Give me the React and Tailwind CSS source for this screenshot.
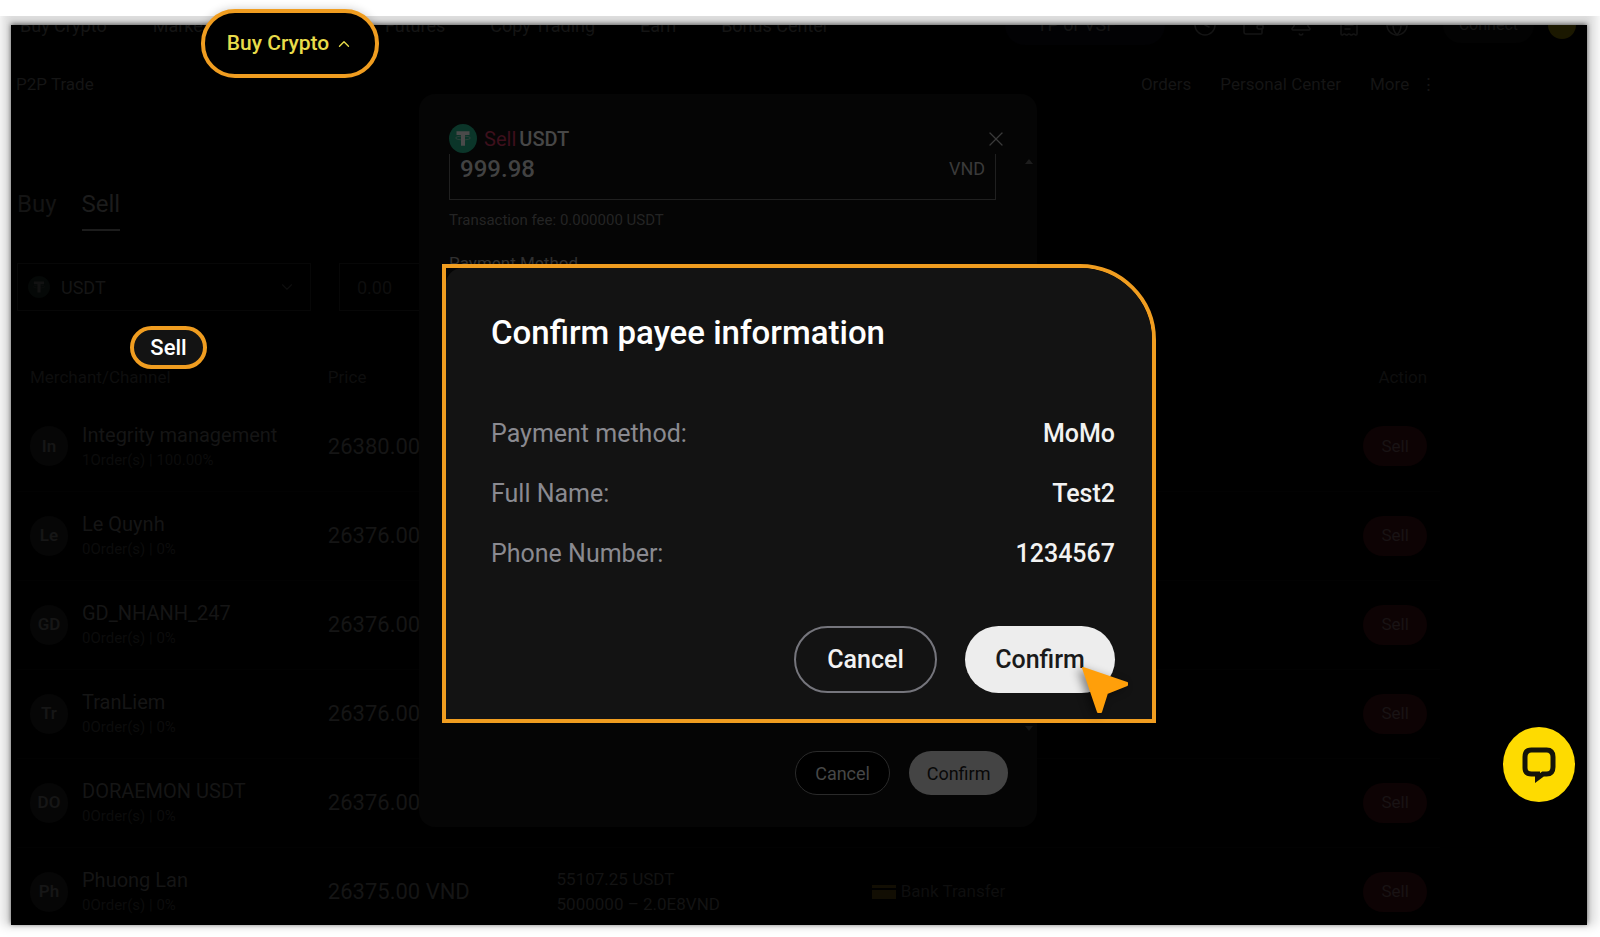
import React from 'react';
import { Bell, ChevronDown, ChevronUp, Clock, Globe, ReceiptText, Wallet, X } from 'lucide-react';

const marketLinks = ['Buy Crypto', 'Markets'];
const tradeLinks = ['Futures', 'Copy Trading', 'Earn', 'Bonus Center'];

const merchants = [
  { initials: 'In', name: 'Integrity management', orders: '1Order(s) | 100.00%', price: '26380.00' },
  { initials: 'Le', name: 'Le Quynh', orders: '0Order(s) | 0%', price: '26376.00' },
  { initials: 'GD', name: 'GD_NHANH_247', orders: '0Order(s) | 0%', price: '26376.00' },
  { initials: 'Tr', name: 'TranLiem', orders: '0Order(s) | 0%', price: '26376.00' },
  { initials: 'DO', name: 'DORAEMON USDT', orders: '0Order(s) | 0%', price: '26376.00' },
  {
    initials: 'Ph',
    name: 'Phuong Lan',
    orders: '0Order(s) | 0%',
    price: '26375.00 VND',
    available: '55107.25 USDT',
    limit: '5000000 – 2.0E8VND',
    payment: 'Bank Transfer',
  },
];

const payee = [
  { label: 'Payment method:', value: 'MoMo' },
  { label: 'Full Name:', value: 'Test2' },
  { label: 'Phone Number:', value: '1234567' },
];

function TetherIcon({ className, disc, mark }) {
  return (
    <svg viewBox="0 0 28 28" className={className} preserveAspectRatio="none" aria-hidden="true">
      <circle cx="14" cy="14" r="14" fill={disc} />
      <path d="M7.5 7h13v3.6h-4.5V21h-4V10.6H7.5z" fill={mark} />
      <ellipse cx="14" cy="13.5" rx="7.5" ry="1.8" fill="none" stroke={mark} strokeWidth="0.5" />
    </svg>
  );
}

function TopNav() {
  return (
    <header className="flex h-5 flex-col justify-end overflow-hidden text-[18px] text-[#141414]">
      <div className="flex h-10 shrink-0 items-center pr-[11px] pl-[9px]">
        <nav className="flex gap-[46px] whitespace-nowrap">
          {marketLinks.map((link) => (
            <a key={link} href="#">{link}</a>
          ))}
        </nav>
        <nav className="ml-[167px] flex gap-[45px] whitespace-nowrap">
          {tradeLinks.map((link) => (
            <a key={link} href="#">{link}</a>
          ))}
        </nav>
        <div className="ml-auto flex items-center">
          <span className="mr-[28px] h-10 w-[160px] rounded-full bg-[#020204] pl-[32px] leading-10">TP or VSF</span>
          <div className="flex gap-[24px]">
            <Clock size={24} strokeWidth={1.5} />
            <Wallet size={24} strokeWidth={1.5} />
            <Bell size={24} strokeWidth={1.5} />
            <ReceiptText size={24} strokeWidth={1.5} />
            <Globe size={24} strokeWidth={1.5} />
          </div>
          <button className="ml-[34px] h-9 rounded-full bg-[#030303] px-4 text-[16px]">Connect</button>
          <span className="ml-[14px] h-7 w-7 rounded-full bg-[#1b1800]" />
        </div>
      </div>
    </header>
  );
}

function SubNav() {
  return (
    <div className="flex h-20 items-center pr-2 pl-[5px] text-[17px] text-[#151515]">
      <a href="#">P2P Trade</a>
      <nav className="ml-auto flex items-center gap-[29px]">
        <a href="#">Orders</a>
        <a href="#">Personal Center</a>
        <a href="#">More</a>
        <span className="-ml-[18px]">⋮</span>
      </nav>
    </div>
  );
}

function MarketTable() {
  return (
    <table className="mt-[43px] w-full table-fixed border-collapse text-left">
      <thead>
        <tr className="h-12 text-[17px] text-[#0e0e0e]">
          <th className="w-[21%] px-[13px] font-normal">Merchant/Channel</th>
          <th className="w-[16%] px-3 font-normal">Price</th>
          <th className="w-[22%] px-[13px]" />
          <th className="px-[15px]" />
          <th className="w-[10%] px-[13px] text-right font-normal">Action</th>
        </tr>
      </thead>
      <tbody>
        {merchants.map((m) => (
          <tr key={m.name} className="h-[89px] border-b border-[#020202]">
            <td className="px-[13px] whitespace-nowrap">
              <div className="flex items-center gap-[14px]">
                <span className="flex h-10 w-[38px] shrink-0 items-center justify-center rounded-full bg-[#060606] text-[17px] font-semibold text-[#161616]">
                  {m.initials}
                </span>
                <div className="pt-[3px]">
                  <div className="text-[20px] leading-[25px] text-[#151515]">{m.name}</div>
                  <div className="text-[15px] leading-[25px] text-[#0c0c0c]">{m.orders}</div>
                </div>
              </div>
            </td>
            <td className="px-3 text-[22px] whitespace-nowrap text-[#151515]">{m.price}</td>
            <td className="px-[13px] text-[17px] leading-[25px] whitespace-nowrap text-[#131313]">
              <div>{m.available}</div>
              <div>{m.limit}</div>
            </td>
            <td className="px-[15px] text-[17px] whitespace-nowrap text-[#0e0e0e]">
              {m.payment && (
                <div className="flex items-center gap-[5px]">
                  <svg viewBox="0 0 24 14" className="h-[14px] w-6" aria-hidden="true">
                    <rect width="24" height="3" fill="#120e03" />
                    <rect y="5" width="24" height="9" fill="#120e03" />
                  </svg>
                  {m.payment}
                </div>
              )}
            </td>
            <td className="px-[13px] text-right">
              <button className="h-10 w-16 rounded-full bg-[#0d0304] text-[17px] text-[#191314]">Sell</button>
            </td>
          </tr>
        ))}
      </tbody>
    </table>
  );
}

function SellModal() {
  return (
    <section className="absolute inset-x-0 top-[69px] mx-auto flex min-h-[733px] w-[618px] max-w-full flex-col rounded-2xl bg-[#050505] pt-[29px] pr-[29px] pb-8 pl-[30px]">
      <div className="flex h-[31px] items-center text-[20px]">
        <TetherIcon className="h-[29px] w-7" disc="#0b3529" mark="#4a4a4a" />
        <h2 className="ml-[7px] flex gap-[3px]">
          <span className="text-[#3d101c]">Sell</span>
          <span className="font-medium text-[#474747]">USDT</span>
        </h2>
        <button aria-label="Close" className="ml-auto text-[#3a3a3a]">
          <X size={24} strokeWidth={1.3} />
        </button>
      </div>
      <label className="mr-3 flex h-[46px] items-start border border-t-0 border-[#202020] pr-[10px] pl-[10px] text-[18px] text-[#3a3a3a]">
        <input defaultValue="999.98" className="min-w-0 flex-1 text-[24px] leading-[30px] font-medium text-[#424242] outline-none" />
        <span className="leading-[30px]">VND</span>
      </label>
      <p className="mt-2 text-[15px] leading-6 text-[#242424]">Transaction fee: 0.000000 USDT</p>
      <p className="mt-[19px] text-[17px] leading-6 text-[#303030]">Payment Method</p>
      <div className="mt-auto flex justify-end gap-[19px] text-[18px]">
        <button className="h-11 w-[95px] rounded-full border border-[#2a2a2a] bg-black text-[#474747]">Cancel</button>
        <button className="h-11 w-[99px] rounded-full bg-[#444] text-[#080808]">Confirm</button>
      </div>
      <span className="absolute top-[65px] right-1 border-x-4 border-b-[5px] border-x-transparent border-b-[#1d1d1d]" />
      <span className="absolute right-1 bottom-24 border-x-4 border-t-[5px] border-x-transparent border-t-[#151515]" />
    </section>
  );
}

function ConfirmDialog() {
  return (
    <section
      role="dialog"
      aria-labelledby="payee-title"
      className="absolute inset-x-0 top-[239px] mx-auto w-[714px] max-w-full rounded-tr-[76px] border-4 border-[#f09d20] bg-[#050505]"
    >
      <div className="rounded-tl-2xl rounded-tr-[72px] bg-[#131313] pt-[45px] pr-[37px] pb-[26px] pl-[45px]">
        <h1 id="payee-title" className="text-[33px] leading-10 font-medium text-white">Confirm payee information</h1>
        <dl className="mt-[51px] text-[25px] leading-[60px]">
          {payee.map((row) => (
            <div key={row.label} className="flex justify-between">
              <dt className="text-[#8a8a90]">{row.label}</dt>
              <dd className="font-medium text-[#f2f2f2]">{row.value}</dd>
            </div>
          ))}
        </dl>
        <div className="mt-[42px] flex justify-end gap-7 text-[25px] font-medium">
          <button className="h-[67px] w-[143px] rounded-full border-2 border-[#75757c] text-[#f2f2f2]">Cancel</button>
          <button className="h-[67px] w-[150px] rounded-full bg-[#ededed] text-[#1a1a1a]">Confirm</button>
        </div>
      </div>
      <svg
        viewBox="0 0 48 48"
        className="absolute right-[23px] bottom-[5px] h-12 w-12 drop-shadow-[-4px_2px_5px_rgba(0,0,0,0.45)]"
        aria-hidden="true"
      >
        <path d="M2 2 46 17 46 19 26 27 20 46 17 46z" fill="#ff9f0a" stroke="#ff9f0a" strokeWidth="2" strokeLinejoin="round" />
      </svg>
    </section>
  );
}

export default function App() {
  return (
    <div className="h-screen overflow-hidden bg-white pt-[25px] pr-[13px] pb-3 pl-[11px] font-['Roboto',sans-serif]">
      <div className="relative h-full">
        {/* soft edge around the frame, cut flat along the top */}
        <div className="absolute inset-0 shadow-[0_-1px_5px_0_rgba(0,0,0,0.6),0_-8px_10px_9px_#dcdcdc] [clip-path:inset(-9px_-20px_-20px_-20px)]" />

        <div className="relative h-full overflow-hidden bg-black">
          <TopNav />
          <main className="w-[91%]">
            <SubNav />
            <div className="mt-[60px] pr-[5px] pl-[6px]">
              <div className="flex gap-[25px] text-[24px] leading-[38px] text-[#141414]">
                <button className="border-b-2 border-transparent pb-[6px]">Buy</button>
                <button className="border-b-2 border-[#1c1c1c] pb-[6px] text-[#1c1c1c]">Sell</button>
              </div>
              <div className="mt-8 flex gap-7 text-[18px] text-[#151515]">
                <label className="flex h-12 w-[294px] items-center gap-[11px] border border-[#070707] pr-[14px] pl-[10px]">
                  <TetherIcon className="h-[22px] w-[22px]" disc="#050807" mark="#121212" />
                  <select aria-label="Coin" className="flex-1 appearance-none outline-none">
                    <option>USDT</option>
                  </select>
                  <ChevronDown size={18} strokeWidth={1.5} color="#0e0e0e" />
                </label>
                <input
                  aria-label="Amount"
                  defaultValue="0.00"
                  className="h-12 w-[294px] border border-[#070707] pl-[17px] text-[#0e0e0e] outline-none"
                />
              </div>
              <MarketTable />
            </div>
          </main>
          <div className="absolute inset-y-0 left-0 w-[91%]">
            <SellModal />
          </div>
        </div>

        <ConfirmDialog />

        <button className="absolute -top-4 left-[190px] flex h-[69px] w-[178px] items-center justify-center gap-[6px] rounded-[34px] border-4 border-[#f09d20] bg-black text-[21px] font-medium text-[#e8dc4a] shadow-[0_0_10px_rgba(0,0,0,0.2)]">
          Buy Crypto
          <ChevronUp size={18} strokeWidth={1.8} />
        </button>
        <button className="absolute top-[301px] left-[119px] h-[43px] w-[77px] rounded-full border-4 border-[#f09d20] bg-[#131313] text-[22px] leading-[35px] font-medium text-white">
          Sell
        </button>
        <button
          aria-label="Chat"
          className="absolute right-3 bottom-[123px] flex h-[75px] w-[72px] items-center justify-center rounded-[50%] bg-[#fedb00]"
        >
          <svg viewBox="0 0 34 36" className="h-9 w-[34px]" fill="none" aria-hidden="true">
            <path
              d="M13 27H9.5Q3 27 3 21V10Q3 3 9.5 3H24.5Q31 3 31 10V20Q31 27 24.5 27H21L15.5 31V27z"
              stroke="#14140a"
              strokeWidth="5"
            />
          </svg>
        </button>
      </div>
    </div>
  );
}
